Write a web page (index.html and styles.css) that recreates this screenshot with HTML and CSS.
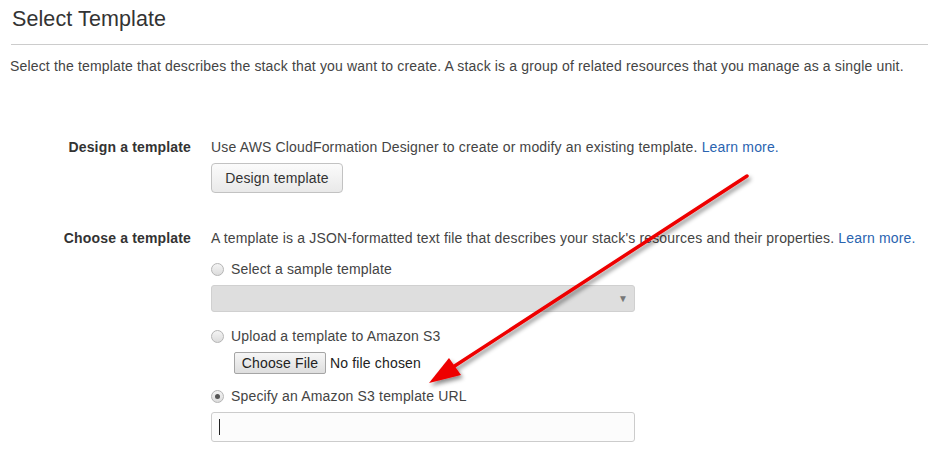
FILE: index.html
```html
<!DOCTYPE html>
<html>
<head>
<meta charset="utf-8">
<link rel="stylesheet" href="styles.css">
</head>
<body>
<div class="page">
  <h1 class="title">Select Template</h1>
  <p class="intro">Select the template that describes the stack that you want to create. A stack is a group of related resources that you manage as a single unit.</p>

  <div class="row row-design">
    <div class="label">Design a template</div>
    <div class="content">
      <div class="line">Use AWS CloudFormation Designer to create or modify an existing template. <a class="link">Learn more.</a></div>
      <span class="btn">Design template</span>
    </div>
  </div>

  <div class="row row-choose">
    <div class="label">Choose a template</div>
    <div class="content">
      <div class="line">A template is a JSON-formatted text file that describes your stack's resources and their properties. <a class="link">Learn more.</a></div>
      <div class="line radio-line r1"><span class="radio"></span>Select a sample template</div>
      <div class="select"><span class="caret">&#9660;</span></div>
      <div class="line radio-line r2"><span class="radio"></span>Upload a template to Amazon S3</div>
      <div class="file"><span class="file-btn">Choose File</span><span class="file-text">No file chosen</span></div>
      <div class="line radio-line r3"><span class="radio checked"></span>Specify an Amazon S3 template URL</div>
      <div class="input"><span class="cursor"></span></div>
    </div>
  </div>
</div>
<svg class="arrow" width="928" height="466" viewBox="0 0 928 466">
  <defs>
    <filter id="sh" x="-10%" y="-10%" width="120%" height="120%">
      <feDropShadow dx="2" dy="3" stdDeviation="2" flood-color="#000" flood-opacity="0.45"/>
    </filter>
  </defs>
  <g filter="url(#sh)">
    <line x1="747" y1="176" x2="450" y2="369" stroke="#ee0000" stroke-width="3.5" stroke-linecap="round"/>
    <polygon points="429,383 449,358 461,375" fill="#ee0000"/>
  </g>
</svg>
</body>
</html>
```
FILE: styles.css
```css
html, body {
  margin: 0;
  padding: 0;
  background: #fff;
}
body {
  font-family: "Liberation Sans", Arial, sans-serif;
  font-size: 14px;
  letter-spacing: 0.16px;
  color: #444;
  width: 928px;
  height: 466px;
  overflow: hidden;
  position: relative;
}
.page {
  padding-left: 11px;
}
.title {
  margin: 0;
  padding: 7px 0 13px 1px;
  font-size: 21.5px;
  font-weight: normal;
  letter-spacing: 0.1px;
  line-height: 24px;
  color: #333;
  border-bottom: 1px solid #ccc;
}
.intro {
  margin: 11px 0 0 -1px;
  line-height: 20px;
}
.row {
  display: grid;
  grid-template-columns: 180px 1fr;
  column-gap: 20px;
}
.row-design {
  margin-top: 61px;
}
.row-choose {
  margin-top: 35px;
}
.label {
  text-align: right;
  font-weight: bold;
  color: #333;
  line-height: 20px;
}
.content {
  display: flex;
  flex-direction: column;
  align-items: flex-start;
}
.line {
  line-height: 20px;
}
.link {
  color: #2a64b0;
  text-decoration: none;
}
.btn {
  margin-top: 6px;
  box-sizing: border-box;
  height: 30px;
  width: 132px;
  display: flex;
  align-items: center;
  justify-content: center;
  border: 1px solid #c2c2c2;
  border-radius: 4px;
  background: linear-gradient(#fbfbfb, #e9e9e9);
  color: #333;
}
.radio-line {
  display: flex;
  align-items: center;
}
.r1 { margin-top: 11px; }
.r2 { margin-top: 14px; }
.r3 { margin-top: 12px; }
.radio {
  box-sizing: border-box;
  width: 13px;
  height: 13px;
  border-radius: 50%;
  border: 1px solid #b5b5b5;
  background: linear-gradient(#f4f4f4, #dcdcdc);
  margin-right: 7px;
  position: relative;
}
.radio.checked::after {
  content: "";
  position: absolute;
  left: 3px;
  top: 3px;
  width: 5px;
  height: 5px;
  border-radius: 50%;
  background: #555;
}
.select {
  margin-top: 6px;
  box-sizing: border-box;
  width: 424px;
  height: 27px;
  border: 1px solid #d0d0d0;
  border-radius: 3px;
  background: #dedede;
  display: flex;
  align-items: center;
  justify-content: flex-end;
  padding-right: 6px;
}
.caret {
  font-size: 10px;
  color: #777;
}
.file {
  margin-top: 6px;
  margin-left: 23px;
  display: flex;
  align-items: center;
  font-size: 14px;
}
.file-btn {
  box-sizing: border-box;
  height: 22px;
  width: 92px;
  display: flex;
  align-items: center;
  justify-content: center;
  border: 1px solid #a5a5a5;
  border-radius: 2px;
  background: linear-gradient(#f6f6f6, #dedede);
  color: #222;
}
.file-text {
  margin-left: 4px;
  color: #222;
}
.input {
  margin-top: 6px;
  box-sizing: border-box;
  width: 424px;
  height: 30px;
  border: 1px solid #ccc;
  border-radius: 3px;
  background: #fcfcfc;
  display: flex;
  align-items: center;
  padding-left: 7px;
}
.cursor {
  width: 1px;
  height: 16px;
  background: #222;
}
.arrow {
  position: absolute;
  left: 0;
  top: 0;
  pointer-events: none;
}
```
